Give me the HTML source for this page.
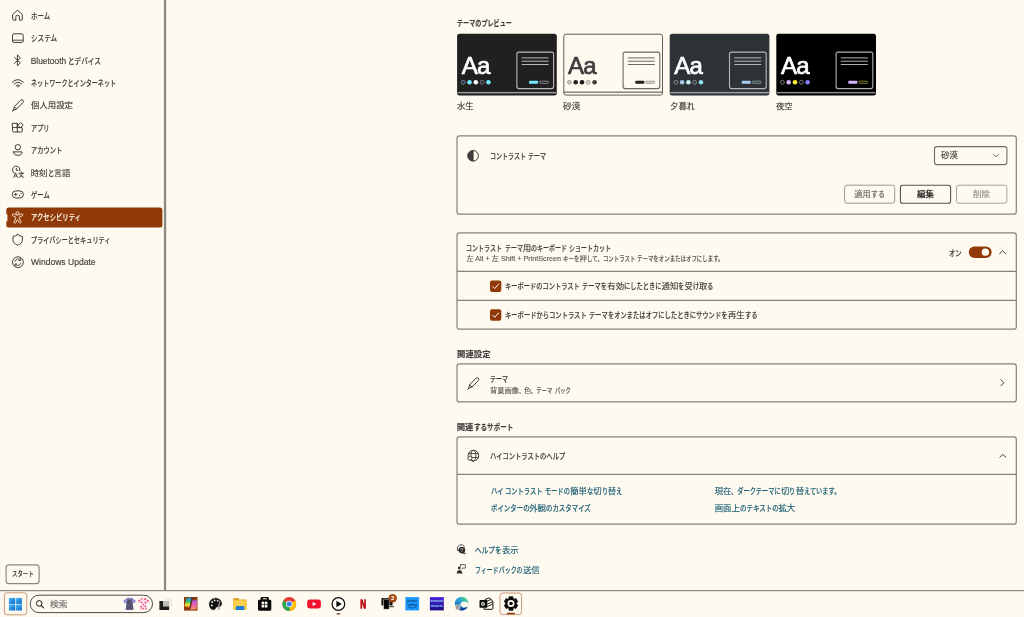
<!DOCTYPE html>
<html lang="ja"><head><meta charset="utf-8"><title>設定</title>
<style>
html,body{margin:0;padding:0}
body{width:1024px;height:617px;overflow:hidden;position:relative;background:#fffaef;font-family:"Liberation Sans","Noto Sans CJK JP",sans-serif}
svg.bg{position:absolute;left:0;top:0}
.t{position:absolute;white-space:pre;line-height:12px;height:12px;-webkit-text-stroke:0.15px currentColor}
.r{display:inline-block;white-space:pre;vertical-align:top}
.r>span{display:inline-block;transform-origin:0 50%;white-space:pre}
.k{font-weight:500}
#txt{position:absolute;left:0;top:0;width:1024px;height:617px;will-change:transform}
</style></head>
<body>
<svg class="bg" width="1024" height="617" viewBox="0 0 1024 617">
<rect x="0.00" y="0.00" width="1024.00" height="1.10" fill="#f8f5ee" />
<rect x="0.00" y="1.10" width="1024.00" height="1.10" fill="#fffdf7" />
<rect x="0.00" y="0.00" width="1.10" height="590.00" fill="#f8f5ee" />
<rect x="1.10" y="1.10" width="1.10" height="588.90" fill="#fffdf7" />
<rect x="163.90" y="0.00" width="2.30" height="590.40" fill="#8a8882" />
<rect x="0.00" y="590.00" width="1024.00" height="1.00" fill="#8e8c86" />
<rect x="0.00" y="591.00" width="1024.00" height="1.00" fill="#e6e2d9" />
<rect x="6.30" y="207.50" width="156.10" height="19.90" rx="2.50" fill="#903909" />
<rect x="5.80" y="213.90" width="1.60" height="7.60" rx="0.80" fill="#fffaef" />
<path d="M12.8 14.4 L17.5 10.2 L22.3 14.4 V19.4 Q22.3 20.2 21.5 20.2 H19.5 V16.9 Q19.5 15.3 17.6 15.3 Q15.8 15.3 15.8 16.9 V20.2 H13.6 Q12.8 20.2 12.8 19.4 Z" fill="none" stroke="#3d3d3d" stroke-width="1.00" stroke-linecap="round" stroke-linejoin="round" />
<rect x="12.50" y="33.80" width="10.70" height="8.60" rx="1.40" fill="none" stroke="#3d3d3d" stroke-width="1.00" />
<line x1="12.80" y1="40.20" x2="23.00" y2="40.20" stroke="#3d3d3d" stroke-width="0.90"/>
<path d="M14.5 57.4 L20.4 62.9 L17.4 65.8 V54.9 L20.4 57.8 L14.5 63.3" fill="none" stroke="#3d3d3d" stroke-width="1.00" stroke-linecap="round" stroke-linejoin="round" />
<path d="M12.4 82.2 Q17.9 76.8 23.4 82.2 M14.2 84 Q17.9 80.4 21.6 84 M16 85.7 Q17.9 83.9 19.8 85.7" fill="none" stroke="#3d3d3d" stroke-width="1.00" stroke-linecap="round" stroke-linejoin="round" />
<circle cx="17.90" cy="86.70" r="0.80" fill="#3d3d3d"/>
<path d="M20.6 100.2 Q22 99.2 23 100.2 Q23.9 101.2 23 102.6 L16.6 109 L13.2 110.4 L14.4 106.8 Z M14.4 106.8 L16.6 109 M13.2 110.4 L12.2 111.2" fill="none" stroke="#3d3d3d" stroke-width="1.00" stroke-linecap="round" stroke-linejoin="round" />
<path d="M12.6 123.3 H17.3 V132 H13.5 Q12.6 132 12.6 131.1 Z M12.6 127.6 H22.2 V131.1 Q22.2 132 21.3 132 H17.3 M17.3 127.6 V123.3 M18.2 125 L20.7 122.5 L23.2 125 L20.7 127.5 Z" fill="none" stroke="#3d3d3d" stroke-width="1.00" stroke-linecap="round" stroke-linejoin="round" />
<circle cx="17.85" cy="147.25" r="2.70" fill="none" stroke="#3d3d3d" stroke-width="1.00"/>
<path d="M13.7 151.9 H22.1 Q22.3 155.3 17.9 155.3 Q13.5 155.3 13.7 151.9 Z" fill="none" stroke="#3d3d3d" stroke-width="1.00" stroke-linecap="round" stroke-linejoin="round" />
<path d="M20 170.6 A3.8 3.8 0 1 0 14.6 173.4 M16.3 168.2 V170.4 H17.9" fill="none" stroke="#3d3d3d" stroke-width="1.00" stroke-linecap="round" stroke-linejoin="round" />
<path d="M13.8 177.4 L15.6 172.9 L17.4 177.4 M14.4 176 H16.8" fill="none" stroke="#3d3d3d" stroke-width="0.90" stroke-linecap="round" stroke-linejoin="round" />
<path d="M18.8 173.2 H23.6 M21.2 171.8 V173.2 M19.2 177.4 Q22.4 176.2 22.8 173.2 M19.8 174.4 Q21 176.8 23.6 177.4" fill="none" stroke="#3d3d3d" stroke-width="0.90" stroke-linecap="round" stroke-linejoin="round" />
<rect x="12.30" y="190.90" width="11.10" height="7.10" rx="3.55" fill="none" stroke="#3d3d3d" stroke-width="1.00" />
<path d="M14.5 194.45 H16.9 M15.7 193.25 V195.65" fill="none" stroke="#3d3d3d" stroke-width="0.90" stroke-linecap="round" stroke-linejoin="round" />
<circle cx="19.50" cy="195.50" r="0.65" fill="#3d3d3d"/>
<circle cx="21.00" cy="193.60" r="0.65" fill="#3d3d3d"/>
<path d="M13.4 213.9 Q12.3 213.7 12.3 214.9 Q12.3 215.9 13.3 216.2 L15.6 217 V218.8 L14 221.8 Q13.7 222.9 14.7 223.1 Q15.6 223.2 15.9 222.4 L17.5 219.6 L19.1 222.4 Q19.4 223.2 20.3 223.1 Q21.3 222.9 21 221.8 L19.4 218.8 V217 L21.7 216.2 Q22.7 215.9 22.7 214.9 Q22.7 213.7 21.6 213.9 L18.8 214.9 H16.2 Z" fill="none" stroke="#f7dcc4" stroke-width="1.00" stroke-linecap="round" stroke-linejoin="round" />
<circle cx="17.50" cy="213.20" r="1.50" fill="#903909" stroke="#f7dcc4" stroke-width="1.00"/>
<path d="M17.7 234.5 Q19.9 236.3 22.4 236.4 V239.8 Q22.4 243.6 17.7 245.2 Q13 243.6 13 239.8 V236.4 Q15.5 236.3 17.7 234.5 Z" fill="none" stroke="#3d3d3d" stroke-width="1.00" stroke-linecap="round" stroke-linejoin="round" />
<circle cx="17.90" cy="262.20" r="5.40" fill="none" stroke="#3d3d3d" stroke-width="1.00"/>
<path d="M15 261.2 A3.1 3.1 0 0 1 20.5 260.2 M20.7 258.5 V260.4 H18.8 M20.8 263.2 A3.1 3.1 0 0 1 15.3 264.2 M15.1 265.9 V264 H17" fill="none" stroke="#3d3d3d" stroke-width="0.90" stroke-linecap="round" stroke-linejoin="round" />
<rect x="457.10" y="33.70" width="99.70" height="61.90" rx="2.50" fill="#202020" />
<rect x="457.70" y="91.90" width="98.50" height="1.50" fill="#9c9c9c" />
<rect x="516.90" y="52.10" width="36.70" height="36.50" rx="2.00" fill="none" stroke="#b9b9b9" stroke-width="1.10" />
<rect x="521.60" y="57.40" width="27.00" height="1.00" fill="#b9b9b9" />
<rect x="521.60" y="60.70" width="27.00" height="1.00" fill="#b9b9b9" />
<rect x="521.60" y="64.00" width="27.00" height="1.00" fill="#b9b9b9" />
<rect x="529.10" y="80.80" width="9.00" height="2.90" rx="0.80" fill="#75e9fc" />
<rect x="539.60" y="81.20" width="8.80" height="2.10" rx="0.80" fill="none" stroke="#9a9ab0" stroke-width="0.80" />
<circle cx="463.20" cy="82.30" r="1.90" fill="#1b2a3a" stroke="#8a9bb0" stroke-width="0.80"/>
<circle cx="469.50" cy="82.30" r="2.30" fill="#75e9fc"/>
<circle cx="475.80" cy="82.30" r="2.30" fill="#ffffff"/>
<circle cx="482.10" cy="82.30" r="1.90" fill="#20202e" stroke="#8a8aa0" stroke-width="0.80"/>
<circle cx="488.40" cy="82.30" r="2.30" fill="#75e9fc"/>
<rect x="563.80" y="34.20" width="98.70" height="60.90" rx="2.30" fill="#fffaef" stroke="#5e5c58" stroke-width="1.00" />
<rect x="563.90" y="91.60" width="98.50" height="1.10" fill="#5a5854" />
<rect x="623.10" y="52.10" width="36.70" height="36.50" rx="2.00" fill="none" stroke="#6a6864" stroke-width="1.10" />
<rect x="627.80" y="57.40" width="27.00" height="1.00" fill="#6a6864" />
<rect x="627.80" y="60.70" width="27.00" height="1.00" fill="#6a6864" />
<rect x="627.80" y="64.00" width="27.00" height="1.00" fill="#6a6864" />
<rect x="635.30" y="80.80" width="9.00" height="2.90" rx="0.80" fill="#202020" />
<rect x="645.80" y="81.20" width="8.80" height="2.10" rx="0.80" fill="#e2ded4" stroke="#8a8680" stroke-width="0.80" />
<circle cx="569.40" cy="82.30" r="1.90" fill="#d0cbc0" stroke="#8f8a82" stroke-width="0.80"/>
<circle cx="575.70" cy="82.30" r="2.30" fill="#202020"/>
<circle cx="582.00" cy="82.30" r="2.30" fill="#1a1a1a"/>
<circle cx="588.30" cy="82.30" r="1.90" fill="#ddd8ce" stroke="#8f8a82" stroke-width="0.80"/>
<circle cx="594.60" cy="82.30" r="2.30" fill="#3d3d3d"/>
<rect x="669.70" y="33.70" width="99.70" height="61.90" rx="2.50" fill="#2d3236" />
<rect x="670.30" y="91.90" width="98.50" height="1.50" fill="#9fa2a4" />
<rect x="729.50" y="52.10" width="36.70" height="36.50" rx="2.00" fill="none" stroke="#b5b7b9" stroke-width="1.10" />
<rect x="734.20" y="57.40" width="27.00" height="1.00" fill="#b5b7b9" />
<rect x="734.20" y="60.70" width="27.00" height="1.00" fill="#b5b7b9" />
<rect x="734.20" y="64.00" width="27.00" height="1.00" fill="#b5b7b9" />
<rect x="741.70" y="80.80" width="9.00" height="2.90" rx="0.80" fill="#a6cbec" />
<rect x="752.20" y="81.20" width="8.80" height="2.10" rx="0.80" fill="none" stroke="#8fb0a8" stroke-width="0.80" />
<circle cx="675.80" cy="82.30" r="1.90" fill="#2d3236" stroke="#a0a4a8" stroke-width="0.80"/>
<circle cx="682.10" cy="82.30" r="2.30" fill="#a6cbec"/>
<circle cx="688.40" cy="82.30" r="2.30" fill="#c5f3f5"/>
<circle cx="694.70" cy="82.30" r="1.90" fill="#2d3236" stroke="#9a9ea2" stroke-width="0.80"/>
<circle cx="701.00" cy="82.30" r="2.30" fill="#8ee3f0"/>
<rect x="776.30" y="33.70" width="99.70" height="61.90" rx="2.50" fill="#000000" />
<rect x="776.90" y="91.90" width="98.50" height="1.50" fill="#8c8c8c" />
<rect x="836.10" y="52.10" width="36.70" height="36.50" rx="2.00" fill="none" stroke="#b0b0b0" stroke-width="1.10" />
<rect x="840.80" y="57.40" width="27.00" height="1.00" fill="#b0b0b0" />
<rect x="840.80" y="60.70" width="27.00" height="1.00" fill="#b0b0b0" />
<rect x="840.80" y="64.00" width="27.00" height="1.00" fill="#b0b0b0" />
<rect x="848.30" y="80.80" width="9.00" height="2.90" rx="0.80" fill="#d6b4fd" />
<rect x="858.80" y="81.20" width="8.80" height="2.10" rx="0.80" fill="none" stroke="#a09a3a" stroke-width="0.80" />
<circle cx="782.40" cy="82.30" r="1.90" fill="#000" stroke="#9a9a9a" stroke-width="0.80"/>
<circle cx="788.70" cy="82.30" r="2.30" fill="#d6b4fd"/>
<circle cx="795.00" cy="82.30" r="2.30" fill="#ffee32"/>
<circle cx="801.30" cy="82.30" r="1.90" fill="#000" stroke="#9a9a9a" stroke-width="0.80"/>
<circle cx="807.60" cy="82.30" r="2.30" fill="#8080ff"/>
<rect x="457.00" y="135.80" width="559.30" height="78.40" rx="2.50" fill="none" stroke="#84827c" stroke-width="1.20" />
<rect x="457.00" y="232.80" width="559.30" height="96.40" rx="2.50" fill="none" stroke="#84827c" stroke-width="1.20" />
<line x1="457.00" y1="271.40" x2="1016.30" y2="271.40" stroke="#84827c" stroke-width="1.20"/>
<line x1="457.00" y1="300.30" x2="1016.30" y2="300.30" stroke="#84827c" stroke-width="1.20"/>
<rect x="457.00" y="363.90" width="559.30" height="38.00" rx="2.50" fill="none" stroke="#84827c" stroke-width="1.20" />
<rect x="457.00" y="436.80" width="559.30" height="87.40" rx="2.50" fill="none" stroke="#84827c" stroke-width="1.20" />
<line x1="457.00" y1="474.40" x2="1016.30" y2="474.40" stroke="#84827c" stroke-width="1.20"/>
<circle cx="473.10" cy="155.80" r="5.30" fill="none" stroke="#3d3d3d" stroke-width="1.00"/>
<path d="M473.1 150.5 A5.3 5.3 0 0 0 473.1 161.1 Z" fill="#3d3d3d" stroke="#3d3d3d" stroke-width="0.50" stroke-linecap="round" stroke-linejoin="round" />
<rect x="934.50" y="146.60" width="72.40" height="18.00" rx="2.30" fill="none" stroke="#6f6d68" stroke-width="1.10" />
<path d="M993.6 154.5 L996 156.9 L998.4 154.5" fill="none" stroke="#3d3d3d" stroke-width="0.80" stroke-linecap="round" stroke-linejoin="round" />
<rect x="844.60" y="185.20" width="50.10" height="18.00" rx="2.30" fill="none" stroke="#9a9892" stroke-width="1.00" />
<rect x="900.40" y="185.20" width="50.20" height="18.00" rx="2.30" fill="none" stroke="#55534f" stroke-width="1.10" />
<rect x="956.50" y="185.20" width="50.40" height="18.00" rx="2.30" fill="none" stroke="#a5a39d" stroke-width="1.00" />
<rect x="968.80" y="246.40" width="22.80" height="11.50" rx="5.75" fill="#903909" />
<circle cx="985.40" cy="252.15" r="3.70" fill="#fffaef"/>
<path d="M999.6 253.7 L1002.6 250.8 L1005.6 253.7" fill="none" stroke="#3d3d3d" stroke-width="1.00" stroke-linecap="round" stroke-linejoin="round" />
<path d="M999.8 457.3 L1002.8 454.4 L1005.8 457.3" fill="none" stroke="#3d3d3d" stroke-width="1.00" stroke-linecap="round" stroke-linejoin="round" />
<path d="M1000.9 379.7 L1003.8 382.7 L1000.9 385.7" fill="none" stroke="#3d3d3d" stroke-width="1.00" stroke-linecap="round" stroke-linejoin="round" />
<rect x="490.00" y="280.60" width="11.30" height="11.30" rx="2.00" fill="#903909" />
<path d="M492.8 286.55 L494.8 288.55 L498.6 284.15" fill="none" stroke="#fffaef" stroke-width="1.00" stroke-linecap="round" stroke-linejoin="round" />
<rect x="490.00" y="309.35" width="11.30" height="11.30" rx="2.00" fill="#903909" />
<path d="M492.8 315.30 L494.8 317.30 L498.6 312.90" fill="none" stroke="#fffaef" stroke-width="1.00" stroke-linecap="round" stroke-linejoin="round" />
<g transform="translate(455.4 278)">
<path d="M20.6 100.2 Q22 99.2 23 100.2 Q23.9 101.2 23 102.6 L16.6 109 L13.2 110.4 L14.4 106.8 Z M14.4 106.8 L16.6 109 M13.2 110.4 L12.2 111.2" fill="none" stroke="#3d3d3d" stroke-width="1.00" stroke-linecap="round" stroke-linejoin="round" />
</g>
<circle cx="473.40" cy="455.60" r="5.30" fill="none" stroke="#3d3d3d" stroke-width="1.00"/>
<ellipse cx="473.4" cy="455.6" rx="2.4" ry="5.3" fill="none" stroke="#3d3d3d" stroke-width="0.9"/>
<path d="M468.6 453.6 H478.2 M468.6 457.5 H478.2" fill="none" stroke="#3d3d3d" stroke-width="0.90" stroke-linecap="round" stroke-linejoin="round" />
<circle cx="469.90" cy="458.20" r="2.10" fill="#fffaef" stroke="#3d3d3d" stroke-width="0.90"/>
<path d="M471.4 459.8 L473 461.6" fill="none" stroke="#3d3d3d" stroke-width="1.00" stroke-linecap="round" stroke-linejoin="round" />
<path d="M457.9 550.6 A3.9 3.9 0 1 1 464.6 546.6" fill="none" stroke="#3d3d3d" stroke-width="0.90" stroke-linecap="round" stroke-linejoin="round" />
<path d="M457.3 549.6 L457.9 550.9 L459 550.2" fill="none" stroke="#3d3d3d" stroke-width="0.70" stroke-linecap="round" stroke-linejoin="round" />
<circle cx="461.90" cy="550.10" r="3.30" fill="#2e2e2e"/>
<path d="M463.6 552.2 L465.8 553.8 L462.6 553.2 Z" fill="#2e2e2e" stroke="#2e2e2e" stroke-width="0.50" stroke-linecap="round" stroke-linejoin="round" />
<text x="461.9" y="552" font-size="5" font-weight="700" text-anchor="middle" fill="#bdbab2" font-family="Liberation Sans,sans-serif">?</text>
<circle cx="459.30" cy="568.00" r="1.40" fill="#2e2e2e"/>
<path d="M456.9 573.2 Q456.9 570.3 459.5 570.3 Q462.2 570.3 462.2 573.2 Z" fill="#2e2e2e" stroke="#2e2e2e" stroke-width="0.30" stroke-linecap="round" stroke-linejoin="round" />
<path d="M460.6 564.7 H465.4 V568.1 H462.8 L461.8 569 M460.6 564.7 V566" fill="none" stroke="#3d3d3d" stroke-width="0.80" stroke-linecap="round" stroke-linejoin="round" />
<rect x="6.10" y="564.80" width="33.00" height="18.90" rx="3.00" fill="#fffaef" stroke="#8a8882" stroke-width="1.20" />
<defs><linearGradient id="wg" x1="0" y1="0" x2="1" y2="1"><stop offset="0" stop-color="#4cc2ff"/><stop offset="1" stop-color="#0a64c8"/></linearGradient></defs>
<rect x="4.40" y="592.80" width="22.40" height="22.00" rx="2.60" fill="#fffaef" stroke="#c89878" stroke-width="1.00" />
<rect x="8.90" y="597.90" width="6.20" height="6.00" fill="url(#wg)" />
<rect x="15.70" y="597.90" width="6.20" height="6.00" fill="url(#wg)" />
<rect x="8.90" y="604.50" width="6.20" height="6.00" fill="url(#wg)" />
<rect x="15.70" y="604.50" width="6.20" height="6.00" fill="url(#wg)" />
<rect x="30.20" y="595.20" width="122.30" height="17.40" rx="8.70" fill="#fffaef" stroke="#4a4a4a" stroke-width="1.00" />
<circle cx="39.20" cy="603.40" r="2.80" fill="none" stroke="#1a1a1a" stroke-width="1.00"/>
<path d="M41.3 605.6 L43.6 607.9" fill="none" stroke="#1a1a1a" stroke-width="1.10" stroke-linecap="round" stroke-linejoin="round" />
<path d="M123.2 600.8 L127.4 597.8 H131.8 L136 600.8 L134.4 603.6 L132.6 602.6 L133.6 609.8 H125.6 L126.6 602.6 L124.8 603.6 Z" fill="#9490dc" stroke="none" stroke-width="0.00" stroke-linecap="round" stroke-linejoin="round" />
<path d="M127.8 598.2 L129.6 600.2 L131.4 598.2 L132.6 603 L133.4 609.8 H125.8 L126.6 603 Z" fill="#55536f" stroke="none" stroke-width="0.00" stroke-linecap="round" stroke-linejoin="round" />
<path d="M137.2 600.8 L141.2 597.8 H145.8 L149.8 600.8 L148.4 603.8 L146.6 602.8 L147 609.8 H140 L140.4 602.8 L138.6 603.8 Z" fill="#fbdde6" stroke="none" stroke-width="0.00" stroke-linecap="round" stroke-linejoin="round" />
<circle cx="139.20" cy="600.60" r="0.90" fill="#ee3f78"/>
<circle cx="141.60" cy="599.00" r="0.80" fill="#ee3f78"/>
<circle cx="145.00" cy="599.20" r="0.90" fill="#ee3f78"/>
<circle cx="147.80" cy="600.80" r="0.90" fill="#ee3f78"/>
<circle cx="141.40" cy="602.40" r="0.80" fill="#ee3f78"/>
<circle cx="145.60" cy="602.60" r="0.90" fill="#ee3f78"/>
<circle cx="143.40" cy="604.60" r="0.80" fill="#ee3f78"/>
<circle cx="141.20" cy="606.60" r="0.90" fill="#ee3f78"/>
<circle cx="145.40" cy="606.40" r="0.80" fill="#ee3f78"/>
<circle cx="143.20" cy="608.60" r="0.80" fill="#ee3f78"/>
<circle cx="146.20" cy="608.80" r="0.70" fill="#ee3f78"/>
<circle cx="140.80" cy="609.00" r="0.60" fill="#ee3f78"/>
<rect x="165.60" y="598.00" width="7.00" height="8.40" rx="0.50" fill="#efede8" />
<rect x="163.00" y="601.00" width="6.10" height="5.80" fill="#bebcb7" />
<path d="M159.4 601 H163 V606.6 H169.1 V610 H159.4 Z" fill="#1c1c1c" stroke="none" stroke-width="0.00" stroke-linecap="round" stroke-linejoin="round" />
<defs><linearGradient id="cg1" x1="0" y1="0" x2="0" y2="1"><stop offset="0" stop-color="#1e90e8"/><stop offset="0.4" stop-color="#30c070"/><stop offset="0.7" stop-color="#f0e030"/><stop offset="1" stop-color="#f07820"/></linearGradient><linearGradient id="cg2" x1="0" y1="0" x2="0" y2="1"><stop offset="0" stop-color="#a860f0"/><stop offset="0.5" stop-color="#f060a8"/><stop offset="1" stop-color="#f89860"/></linearGradient></defs>
<rect x="184.00" y="597.00" width="13.50" height="13.60" fill="#8c3c0c" />
<path d="M186.6 598.2 L192 597.4 L190 607.8 L184.4 606.2 Z" fill="url(#cg1)" stroke="none" stroke-width="0.00" stroke-linecap="round" stroke-linejoin="round" />
<path d="M192.6 600.6 L197.2 600.2 L196.6 609.2 L190.2 609.8 Z" fill="url(#cg2)" stroke="none" stroke-width="0.00" stroke-linecap="round" stroke-linejoin="round" />
<path d="M192 597.6 L189.8 608.6" fill="none" stroke="#3a1a30" stroke-width="0.90" stroke-linecap="round" stroke-linejoin="round" />
<path d="M215.6 598.2 C211.6 598.2 209.2 601.2 209.2 604.4 C209.2 607.6 211.4 609.8 213.8 609.8 C215.6 609.8 215.2 607.8 216.4 607.2 C217.8 606.6 221.8 607.4 221.8 603.6 C221.8 600.6 219.2 598.2 215.6 598.2 Z" fill="#111" stroke="#111" stroke-width="0.30" stroke-linecap="round" stroke-linejoin="round" />
<circle cx="212.20" cy="602.00" r="0.90" fill="#fffaef"/>
<circle cx="214.60" cy="600.40" r="0.90" fill="#fffaef"/>
<circle cx="217.60" cy="600.60" r="0.90" fill="#fffaef"/>
<circle cx="211.80" cy="605.40" r="0.90" fill="#fffaef"/>
<path d="M219.6 601.6 L218.6 609.8" fill="none" stroke="#fffaef" stroke-width="1.30" stroke-linecap="round" stroke-linejoin="round" />
<path d="M219.6 602 L218.8 609.6" fill="none" stroke="#111" stroke-width="0.60" stroke-linecap="round" stroke-linejoin="round" />
<path d="M233.2 599 Q233.2 597.9 234.3 597.9 H237.6 Q238.2 597.9 238.6 598.4 L239.6 599.6 H245.6 Q246.6 599.6 246.6 600.6 V609 Q246.6 610 245.6 610 H234.2 Q233.2 610 233.2 609 Z" fill="#d9a326" stroke="none" stroke-width="0.00" stroke-linecap="round" stroke-linejoin="round" />
<rect x="233.20" y="600.20" width="13.40" height="9.80" rx="0.80" fill="#fbd04f" />
<path d="M235.8 610 V607.2 Q235.8 606 237 606 H243.2 Q244.4 606 244.4 607.2 V610 Z" fill="#1f7fd6" stroke="none" stroke-width="0.00" stroke-linecap="round" stroke-linejoin="round" />
<path d="M258 601 Q258 599.8 259.2 599.8 H260.6 V598.2 Q260.6 597 261.8 597 H267.6 Q268.8 597 268.8 598.2 V599.8 H270.1 Q271.3 599.8 271.3 601 V609.2 Q271.3 610.8 269.7 610.8 H259.6 Q258 610.8 258 609.2 Z" fill="#080808" stroke="none" stroke-width="0.00" stroke-linecap="round" stroke-linejoin="round" />
<rect x="262.60" y="598.30" width="4.20" height="1.00" rx="0.40" fill="#fffaef" />
<rect x="261.60" y="601.70" width="2.60" height="2.60" fill="#fffaef" />
<rect x="264.80" y="601.70" width="2.60" height="2.60" fill="#fffaef" />
<rect x="261.60" y="604.90" width="2.60" height="2.60" fill="#fffaef" />
<rect x="264.80" y="604.90" width="2.60" height="2.60" fill="#fffaef" />
<circle cx="289.30" cy="604.00" r="6.90" fill="#e33b2e"/>
<path d="M289.3 604 L283.3 600.6 A6.9 6.9 0 0 0 289.9 610.9 Z" fill="#2da94f" stroke="none" stroke-width="0.00" stroke-linecap="round" stroke-linejoin="round" />
<path d="M289.3 604 L289.9 610.9 A6.9 6.9 0 0 0 295.3 600.6 Z" fill="#fdbd00" stroke="none" stroke-width="0.00" stroke-linecap="round" stroke-linejoin="round" />
<circle cx="289.30" cy="604.00" r="3.20" fill="#fff"/>
<circle cx="289.30" cy="604.00" r="2.50" fill="#3b7ded"/>
<rect x="307.20" y="599.50" width="13.70" height="9.00" rx="2.40" fill="#f3122e" />
<path d="M312.6 601.9 L316.4 604 L312.6 606.1 Z" fill="#fff" stroke="none" stroke-width="0.00" stroke-linecap="round" stroke-linejoin="round" />
<circle cx="338.40" cy="604.00" r="6.30" fill="#fffdf8" stroke="#0c0c0c" stroke-width="1.20"/>
<path d="M336.4 600.8 L341.8 604 L336.4 607.2 Z" fill="#0c0c0c" stroke="none" stroke-width="0.00" stroke-linecap="round" stroke-linejoin="round" />
<rect x="336.60" y="613.20" width="3.80" height="1.20" rx="0.60" fill="#6e3210" />
<path d="M360.4 599.2 H362.4 L364.2 604.6 V599.2 H365.9 V608.8 H364 L362.1 603.4 V608.8 H360.4 Z" fill="#c00f18" stroke="none" stroke-width="0.00" stroke-linecap="round" stroke-linejoin="round" />
<rect x="381.40" y="598.00" width="11.20" height="7.60" rx="0.80" fill="#141414" />
<path d="M389.6 606.7 H393.6" fill="none" stroke="#141414" stroke-width="0.90" stroke-linecap="round" stroke-linejoin="round" />
<rect x="383.50" y="599.20" width="5.80" height="10.10" rx="0.90" fill="#050505" stroke="#fffaef" stroke-width="0.50" />
<circle cx="392.70" cy="598.30" r="4.20" fill="#a3460f"/>
<text x="392.7" y="600.4" font-size="5.8" font-weight="700" text-anchor="middle" fill="#fff" font-family="Liberation Sans,sans-serif">3</text>
<rect x="405.40" y="597.10" width="13.70" height="13.30" fill="#1a98ff" />
<text x="412.25" y="602.2" font-size="3.6" text-anchor="middle" fill="#0a3c78" font-family="Liberation Sans,sans-serif" font-weight="700">prime</text>
<text x="412.25" y="605.6" font-size="3.6" text-anchor="middle" fill="#0a3c78" font-family="Liberation Sans,sans-serif" font-weight="700">video</text>
<path d="M408.4 607 Q412.2 609.4 416.2 607" fill="none" stroke="#0a3c78" stroke-width="0.70" stroke-linecap="round" stroke-linejoin="round" />
<defs><linearGradient id="am" x1="0" y1="0" x2="0" y2="1"><stop offset="0" stop-color="#4a24e0"/><stop offset="1" stop-color="#1c0c86"/></linearGradient></defs>
<rect x="429.90" y="597.10" width="13.90" height="13.30" fill="url(#am)" />
<text x="436.85" y="602" font-size="3.4" text-anchor="middle" fill="#8fd8f0" font-family="Liberation Sans,sans-serif" font-weight="700">amazon</text>
<text x="436.85" y="607.4" font-size="4.2" text-anchor="middle" fill="#8fd8f0" font-family="Liberation Sans,sans-serif" font-weight="700">music</text>
<defs><linearGradient id="eg" x1="0.9" y1="0.1" x2="0.15" y2="0.9"><stop offset="0" stop-color="#52d67a"/><stop offset="0.45" stop-color="#27a6d8"/><stop offset="1" stop-color="#1668c8"/></linearGradient></defs>
<circle cx="461.60" cy="603.50" r="6.80" fill="url(#eg)"/>
<path d="M460.4 604.6 Q460.8 601.8 464 601.6 Q468.7 601.8 468.7 605 L468.3 606.8 Q465.6 608.6 463 607.2 Q460.4 606.2 460.4 604.6 Z" fill="#fffaef" stroke="none" stroke-width="0.00" stroke-linecap="round" stroke-linejoin="round" />
<path d="M455.4 606.4 Q458 611.6 463.6 610.2 Q466.8 609.2 468 606.6 Q464 609 461 607.4 Q458.4 606 458.8 603.2 Q455.8 603.8 455.4 606.4 Z" fill="#123f96" stroke="none" stroke-width="0.00" stroke-linecap="round" stroke-linejoin="round" />
<rect x="455.50" y="604.80" width="4.50" height="4.60" rx="0.70" fill="#9c9c9c" stroke="#f4f2ec" stroke-width="0.50" />
<path d="M485.4 599.3 L489.6 597.9 L492.9 601.5 V608.3 Q492.9 609.3 491.9 609.3 H484 V606 Z" fill="#fffaef" stroke="#111" stroke-width="1.00" stroke-linecap="round" stroke-linejoin="round" />
<path d="M486.6 601.3 L490.8 599.6 M487.6 603.9 L492.6 601.8 M487.6 606.3 L492.6 604.2" fill="none" stroke="#111" stroke-width="0.90" stroke-linecap="round" stroke-linejoin="round" />
<rect x="479.50" y="600.10" width="7.80" height="7.60" rx="0.90" fill="#0a0a0a" />
<circle cx="483.00" cy="603.90" r="1.90" fill="#fffaef"/>
<circle cx="483.00" cy="603.90" r="0.90" fill="#3a3a3a"/>
<rect x="500.00" y="593.00" width="21.60" height="21.60" rx="2.80" fill="#fffaef" stroke="#c89878" stroke-width="1.00" />
<polygon points="508.84,598.66 509.13,596.75 512.87,596.75 513.16,598.66 514.11,599.21 515.91,598.51 517.78,601.74 516.27,602.95 516.27,604.05 517.78,605.26 515.91,608.49 514.11,607.79 513.16,608.34 512.87,610.25 509.13,610.25 508.84,608.34 507.89,607.79 506.09,608.49 504.22,605.26 505.73,604.05 505.73,602.95 504.22,601.74 506.09,598.51 507.89,599.21" fill="#0a0a0a" stroke="#0a0a0a" stroke-width="0.8" stroke-linejoin="round"/>
<circle cx="511.00" cy="603.50" r="3.50" fill="#fffaef"/>
<circle cx="511.00" cy="603.50" r="1.80" fill="#0a0a0a"/>
<rect x="506.80" y="612.80" width="8.20" height="1.50" rx="0.70" fill="#903909" />
</svg>
<div id="txt">
<div class="t" style="left:30.75px;top:9.60px;font-size:8.4px;color:#3d3d3d" aria-label="ホーム"><span class="r k" style="width:19.25px"><span style="transform:scaleX(0.7740)">ホーム</span></span></div>
<div class="t" style="left:30.75px;top:32.00px;font-size:8.4px;color:#3d3d3d" aria-label="システム"><span class="r k" style="width:26.10px"><span style="transform:scaleX(0.7851)">システム</span></span></div>
<div class="t" style="left:30.75px;top:55.20px;font-size:8.4px;color:#3d3d3d" aria-label="Bluetooth とデバイス"><span class="r" style="width:37.72px"><span style="transform:scaleX(1.0000)">Bluetooth </span></span><span class="r k" style="width:32.79px"><span style="transform:scaleX(0.7876)">とデバイス</span></span></div>
<div class="t" style="left:30.75px;top:76.70px;font-size:8.4px;color:#3d3d3d" aria-label="ネットワークとインターネット"><span class="r k" style="width:85.10px"><span style="transform:scaleX(0.7258)">ネットワークとインターネット</span></span></div>
<div class="t" style="left:30.75px;top:99.00px;font-size:8.4px;color:#3d3d3d" aria-label="個人用設定"><span class="r" style="width:42.00px"><span style="transform:scaleX(1.0031)">個人用設定</span></span></div>
<div class="t" style="left:30.75px;top:122.30px;font-size:8.4px;color:#3d3d3d" aria-label="アプリ"><span class="r k" style="width:18.50px"><span style="transform:scaleX(0.7365)">アプリ</span></span></div>
<div class="t" style="left:30.75px;top:143.70px;font-size:8.4px;color:#3d3d3d" aria-label="アカウント"><span class="r k" style="width:31.40px"><span style="transform:scaleX(0.7499)">アカウント</span></span></div>
<div class="t" style="left:30.75px;top:166.60px;font-size:8.4px;color:#3d3d3d" aria-label="時刻と言語"><span class="r" style="width:16.75px"><span style="transform:scaleX(1.0000)">時刻</span></span><span class="r k" style="width:6.25px"><span style="transform:scaleX(0.7467)">と</span></span><span class="r" style="width:16.75px"><span style="transform:scaleX(1.0000)">言語</span></span></div>
<div class="t" style="left:30.75px;top:188.70px;font-size:8.4px;color:#3d3d3d" aria-label="ゲーム"><span class="r k" style="width:18.90px"><span style="transform:scaleX(0.7600)">ゲーム</span></span></div>
<div class="t" style="left:30.95px;top:211.00px;font-size:8.4px;color:#fffaef" aria-label="アクセシビリティ"><span class="r k" style="width:49.90px"><span style="transform:scaleX(0.7552)">アクセシビリティ</span></span></div>
<div class="t" style="left:30.75px;top:233.50px;font-size:8.4px;color:#3d3d3d" aria-label="プライバシーとセキュリティ"><span class="r k" style="width:79.50px"><span style="transform:scaleX(0.7348)">プライバシーとセキュリティ</span></span></div>
<div class="t" style="left:30.75px;top:256.40px;font-size:8.4px;color:#3d3d3d" aria-label="Windows Update"><span class="r" style="width:64.50px"><span style="transform:scaleX(1.0188)">Windows Update</span></span></div>
<div class="t" style="left:456.85px;top:17.10px;font-size:8.4px;color:#3d3d3d;font-weight:700" aria-label="テーマのプレビュー"><span class="r" style="width:54.90px"><span style="transform:scaleX(0.7284)">テーマのプレビュー</span></span></div>
<div class="t" style="left:456.75px;top:100.10px;font-size:8.4px;color:#3d3d3d" aria-label="水生"><span class="r" style="width:16.60px"><span style="transform:scaleX(0.9913)">水生</span></span></div>
<div class="t" style="left:562.95px;top:100.10px;font-size:8.4px;color:#3d3d3d" aria-label="砂漠"><span class="r" style="width:17.30px"><span style="transform:scaleX(1.0331)">砂漠</span></span></div>
<div class="t" style="left:670.05px;top:100.10px;font-size:8.4px;color:#3d3d3d" aria-label="夕暮れ"><span class="r" style="width:16.75px"><span style="transform:scaleX(1.0000)">夕暮</span></span><span class="r k" style="width:7.45px"><span style="transform:scaleX(0.8900)">れ</span></span></div>
<div class="t" style="left:776.35px;top:100.10px;font-size:8.4px;color:#3d3d3d" aria-label="夜空"><span class="r" style="width:16.70px"><span style="transform:scaleX(0.9973)">夜空</span></span></div>
<div class="t" style="left:490.00px;top:149.70px;font-size:8.4px;color:#3d3d3d" aria-label="コントラスト テーマ"><span class="r k" style="width:36.08px"><span style="transform:scaleX(0.7202)">コントラスト</span></span><span class="r" style="width:2.33px"><span style="transform:scaleX(1.0000)"> </span></span><span class="r k" style="width:18.10px"><span style="transform:scaleX(0.7202)">テーマ</span></span></div>
<div class="t" style="left:940.75px;top:149.10px;font-size:8.4px;color:#3d3d3d" aria-label="砂漠"><span class="r" style="width:16.75px"><span style="transform:scaleX(1.0002)">砂漠</span></span></div>
<div class="t" style="left:854.25px;top:188.10px;font-size:8.4px;color:#6a6a6a" aria-label="適用する"><span class="r" style="width:16.75px"><span style="transform:scaleX(1.0000)">適用</span></span><span class="r k" style="width:13.75px"><span style="transform:scaleX(0.8211)">する</span></span></div>
<div class="t" style="left:917.05px;top:188.10px;font-size:8.4px;color:#202020;font-weight:500" aria-label="編集"><span class="r" style="width:17.00px"><span style="transform:scaleX(1.0152)">編集</span></span></div>
<div class="t" style="left:973.35px;top:188.10px;font-size:8.4px;color:#8c8c8c" aria-label="削除"><span class="r" style="width:16.90px"><span style="transform:scaleX(1.0092)">削除</span></span></div>
<div class="t" style="left:466.35px;top:242.30px;font-size:8.4px;color:#3d3d3d" aria-label="コントラスト テーマ用のキーボード ショートカット"><span class="r k" style="width:35.94px"><span style="transform:scaleX(0.7174)">コントラスト</span></span><span class="r" style="width:2.33px"><span style="transform:scaleX(1.0000)"> </span></span><span class="r k" style="width:18.03px"><span style="transform:scaleX(0.7174)">テーマ</span></span><span class="r" style="width:8.38px"><span style="transform:scaleX(1.0000)">用</span></span><span class="r k" style="width:36.05px"><span style="transform:scaleX(0.7174)">のキーボード</span></span><span class="r" style="width:2.33px"><span style="transform:scaleX(1.0000)"> </span></span><span class="r k" style="width:42.06px"><span style="transform:scaleX(0.7174)">ショートカット</span></span></div>
<div class="t" style="left:466.38px;top:252.90px;font-size:7.2px;color:#5c5c5c" aria-label="左 Alt + 左 Shift + PrintScreen キーを押して、コントラスト テーマをオンまたはオフにします。"><span class="r" style="width:7.20px"><span style="transform:scaleX(1.0000)">左</span></span><span class="r" style="width:18.19px"><span style="transform:scaleX(1.0000)"> Alt + </span></span><span class="r" style="width:7.20px"><span style="transform:scaleX(1.0000)">左</span></span><span class="r" style="width:64.12px"><span style="transform:scaleX(1.0000)"> Shift + PrintScreen </span></span><span class="r k" style="width:16.33px"><span style="transform:scaleX(0.7566)">キーを</span></span><span class="r" style="width:7.20px"><span style="transform:scaleX(1.0000)">押</span></span><span class="r k" style="width:48.40px"><span style="transform:scaleX(0.7566)">して、コントラスト</span></span><span class="r" style="width:2.00px"><span style="transform:scaleX(1.0000)"> </span></span><span class="r k" style="width:86.48px"><span style="transform:scaleX(0.7566)">テーマをオンまたはオフにします。</span></span></div>
<div class="t" style="left:949.35px;top:247.30px;font-size:8.4px;color:#3d3d3d" aria-label="オン"><span class="r k" style="width:12.65px"><span style="transform:scaleX(0.7555)">オン</span></span></div>
<div class="t" style="left:505.35px;top:279.85px;font-size:8.4px;color:#3d3d3d" aria-label="キーボードのコントラスト テーマを有効にしたときに通知を受け取る"><span class="r k" style="width:74.74px"><span style="transform:scaleX(0.7448)">キーボードのコントラスト</span></span><span class="r" style="width:2.33px"><span style="transform:scaleX(1.0000)"> </span></span><span class="r k" style="width:24.95px"><span style="transform:scaleX(0.7448)">テーマを</span></span><span class="r" style="width:16.75px"><span style="transform:scaleX(1.0000)">有効</span></span><span class="r k" style="width:37.43px"><span style="transform:scaleX(0.7448)">にしたときに</span></span><span class="r" style="width:16.75px"><span style="transform:scaleX(1.0000)">通知</span></span><span class="r k" style="width:6.24px"><span style="transform:scaleX(0.7448)">を</span></span><span class="r" style="width:8.38px"><span style="transform:scaleX(1.0000)">受</span></span><span class="r k" style="width:6.24px"><span style="transform:scaleX(0.7448)">け</span></span><span class="r" style="width:8.38px"><span style="transform:scaleX(1.0000)">取</span></span><span class="r k" style="width:6.24px"><span style="transform:scaleX(0.7448)">る</span></span></div>
<div class="t" style="left:505.35px;top:308.60px;font-size:8.4px;color:#3d3d3d" aria-label="キーボードからコントラスト テーマをオンまたはオフにしたときにサウンドを再生する"><span class="r k" style="width:81.73px"><span style="transform:scaleX(0.7517)">キーボードからコントラスト</span></span><span class="r" style="width:2.33px"><span style="transform:scaleX(1.0000)"> </span></span><span class="r k" style="width:138.51px"><span style="transform:scaleX(0.7517)">テーマをオンまたはオフにしたときにサウンドを</span></span><span class="r" style="width:16.75px"><span style="transform:scaleX(1.0000)">再生</span></span><span class="r k" style="width:12.59px"><span style="transform:scaleX(0.7517)">する</span></span></div>
<div class="t" style="left:456.75px;top:348.25px;font-size:8.4px;color:#3d3d3d;font-weight:700" aria-label="関連設定"><span class="r" style="width:33.50px"><span style="transform:scaleX(1.0001)">関連設定</span></span></div>
<div class="t" style="left:490.00px;top:373.25px;font-size:8.4px;color:#3d3d3d" aria-label="テーマ"><span class="r k" style="width:18.00px"><span style="transform:scaleX(0.7166)">テーマ</span></span></div>
<div class="t" style="left:490.03px;top:384.50px;font-size:7.2px;color:#5c5c5c" aria-label="背景画像、色、テーマ パック"><span class="r" style="width:28.77px"><span style="transform:scaleX(1.0000)">背景画像</span></span><span class="r k" style="width:5.32px"><span style="transform:scaleX(0.7379)">、</span></span><span class="r" style="width:7.20px"><span style="transform:scaleX(1.0000)">色</span></span><span class="r k" style="width:21.23px"><span style="transform:scaleX(0.7379)">、テーマ</span></span><span class="r" style="width:2.00px"><span style="transform:scaleX(1.0000)"> </span></span><span class="r k" style="width:15.92px"><span style="transform:scaleX(0.7379)">パック</span></span></div>
<div class="t" style="left:456.75px;top:421.20px;font-size:8.4px;color:#3d3d3d;font-weight:700" aria-label="関連するサポート"><span class="r" style="width:16.75px"><span style="transform:scaleX(1.0000)">関連</span></span><span class="r" style="width:39.25px"><span style="transform:scaleX(0.7812)">するサポート</span></span></div>
<div class="t" style="left:490.00px;top:449.60px;font-size:8.4px;color:#3d3d3d" aria-label="ハイコントラストのヘルプ"><span class="r k" style="width:75.25px"><span style="transform:scaleX(0.7512)">ハイコントラストのヘルプ</span></span></div>
<div class="t" style="left:490.65px;top:485.00px;font-size:8.4px;color:#1c5e75" aria-label="ハイ コントラスト モードの簡単な切り替え"><span class="r k" style="width:12.40px"><span style="transform:scaleX(0.7473)">ハイ</span></span><span class="r" style="width:2.33px"><span style="transform:scaleX(1.0000)"> </span></span><span class="r k" style="width:37.44px"><span style="transform:scaleX(0.7473)">コントラスト</span></span><span class="r" style="width:2.33px"><span style="transform:scaleX(1.0000)"> </span></span><span class="r k" style="width:25.04px"><span style="transform:scaleX(0.7473)">モードの</span></span><span class="r" style="width:16.75px"><span style="transform:scaleX(1.0000)">簡単</span></span><span class="r k" style="width:6.26px"><span style="transform:scaleX(0.7473)">な</span></span><span class="r" style="width:8.38px"><span style="transform:scaleX(1.0000)">切</span></span><span class="r k" style="width:6.26px"><span style="transform:scaleX(0.7473)">り</span></span><span class="r" style="width:8.38px"><span style="transform:scaleX(1.0000)">替</span></span><span class="r k" style="width:6.26px"><span style="transform:scaleX(0.7473)">え</span></span></div>
<div class="t" style="left:490.65px;top:502.10px;font-size:8.4px;color:#1c5e75" aria-label="ポインターの外観のカスタマイズ"><span class="r k" style="width:38.56px"><span style="transform:scaleX(0.7674)">ポインターの</span></span><span class="r" style="width:16.75px"><span style="transform:scaleX(1.0000)">外観</span></span><span class="r k" style="width:44.79px"><span style="transform:scaleX(0.7674)">のカスタマイズ</span></span></div>
<div class="t" style="left:714.65px;top:484.90px;font-size:8.4px;color:#1c5e75" aria-label="現在、ダークテーマに切り替えています。"><span class="r" style="width:16.75px"><span style="transform:scaleX(1.0000)">現在</span></span><span class="r k" style="width:49.72px"><span style="transform:scaleX(0.7421)">、ダークテーマに</span></span><span class="r" style="width:8.38px"><span style="transform:scaleX(1.0000)">切</span></span><span class="r k" style="width:6.22px"><span style="transform:scaleX(0.7421)">り</span></span><span class="r" style="width:8.38px"><span style="transform:scaleX(1.0000)">替</span></span><span class="r k" style="width:36.36px"><span style="transform:scaleX(0.7421)">えています。</span></span></div>
<div class="t" style="left:714.65px;top:502.00px;font-size:8.4px;color:#1c5e75" aria-label="画面上のテキストの拡大"><span class="r" style="width:25.12px"><span style="transform:scaleX(1.0000)">画面上</span></span><span class="r k" style="width:38.73px"><span style="transform:scaleX(0.7746)">のテキストの</span></span><span class="r" style="width:16.75px"><span style="transform:scaleX(1.0000)">拡大</span></span></div>
<div class="t" style="left:475.45px;top:544.30px;font-size:8.4px;color:#1c5e75" aria-label="ヘルプを表示"><span class="r k" style="width:26.55px"><span style="transform:scaleX(0.7927)">ヘルプを</span></span><span class="r" style="width:16.75px"><span style="transform:scaleX(1.0000)">表示</span></span></div>
<div class="t" style="left:475.45px;top:564.10px;font-size:8.4px;color:#1c5e75" aria-label="フィードバックの送信"><span class="r k" style="width:47.55px"><span style="transform:scaleX(0.7114)">フィードバックの</span></span><span class="r" style="width:16.75px"><span style="transform:scaleX(1.0000)">送信</span></span></div>
<div class="t" style="left:11.68px;top:567.60px;font-size:7.2px;color:#3d3d3d" aria-label="スタート"><span class="r k" style="width:21.63px"><span style="transform:scaleX(0.7520)">スタート</span></span></div>
<div class="t" style="left:49.85px;top:597.80px;font-size:8.4px;color:#6c6c6c" aria-label="検索"><span class="r" style="width:17.50px"><span style="transform:scaleX(1.0450)">検索</span></span></div>
<div class="aa" style="left:461.70px;color:#fff">Aa</div>
<div class="aa" style="left:567.90px;color:#3d3d3d">Aa</div>
<div class="aa" style="left:674.30px;color:#fff">Aa</div>
<div class="aa" style="left:780.90px;color:#fff">Aa</div>
<style>.aa{position:absolute;top:52px;font-size:24px;line-height:28px;letter-spacing:-0.7px;-webkit-text-stroke:0.7px currentColor}</style>
</div>
</body></html>
